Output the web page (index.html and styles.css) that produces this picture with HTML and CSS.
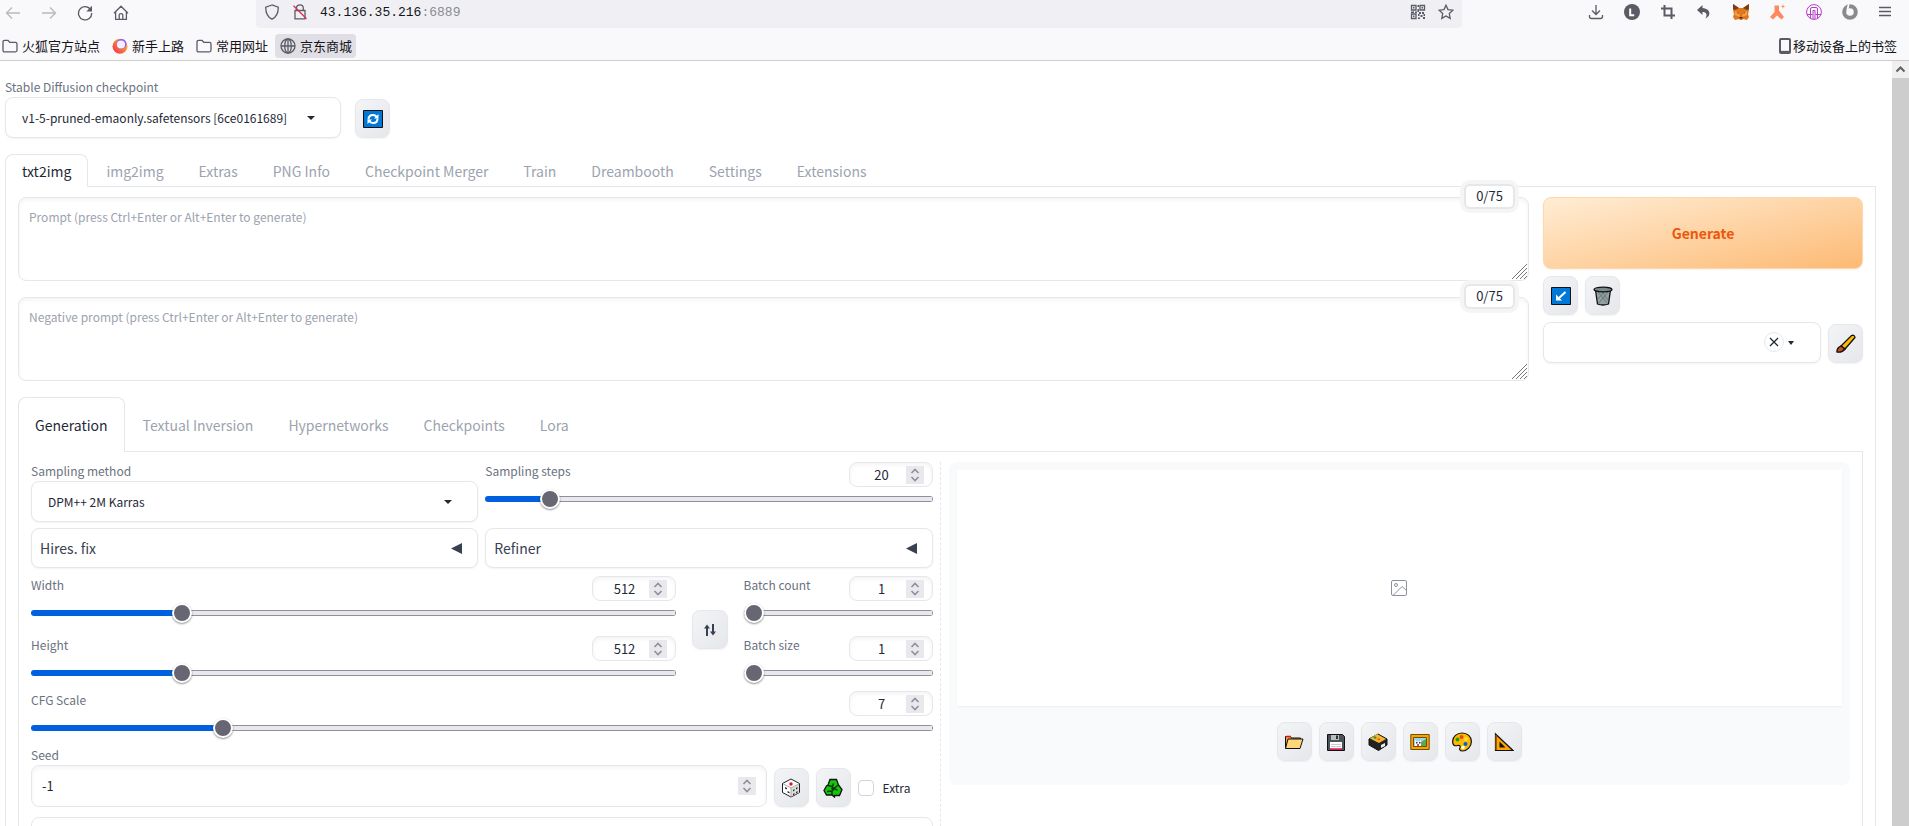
FILE: index.html
```html
<!DOCTYPE html>
<html lang="en">
<head>
<meta charset="utf-8">
<title>Stable Diffusion</title>
<link rel="stylesheet" href="styles.css">
</head>
<body>
<header class="chrome">
  <div class="toolbar">
    <nav class="nav-icons">
      <button class="plain faded" aria-label="Back"><svg width="16" height="16" viewBox="0 0 16 16"><path d="M15 8H2M7 2.500L1.500 8l5.500 5.500"/></svg></button>
      <button class="plain faded" aria-label="Forward"><svg width="16" height="16" viewBox="0 0 16 16"><path d="M1 8h13M9 2.500L14.500 8 9 13.500"/></svg></button>
      <button class="plain" aria-label="Reload"><svg width="16" height="16" viewBox="0 0 16 16"><path d="M13.500 4.500A6.600 6.600 0 1 0 14.700 8"/><path class="solid" d="M15 .8v5.700H9.300z"/></svg></button>
      <button class="plain" aria-label="Home"><svg width="16" height="16" viewBox="0 0 16 16"><path d="M1 8.300L8 1.200l7 7.100M2.600 7v7.300h10.800V7M6.200 14V9.800q0-1.200 1.800-1.200t1.800 1.200V14"/></svg></button>
    </nav>
    <div class="urlbar">
      <svg width="16" height="16" viewBox="0 0 16 16"><path d="M8 1L1.700 3.200c0 6 2 10 6.300 12 4.300-2 6.300-6 6.300-12z"/></svg>
      <svg width="16" height="16" viewBox="0 0 16 16"><path d="M4.500 6.500V4.300a3.400 3.400 0 0 1 6.800 0v2.200M3 6.500h10v8.300H3z"/><path class="red" d="M1.500 1.800l13 13"/></svg>
      <div class="url"><b>43.136.35.216</b>:6889</div>
      <div class="url-end">
        <svg width="16" height="16" viewBox="0 0 16 16"><path d="M1.500 1.500h4.500v4.500h-4.500zM10 1.500h4.500v4.500H10zM1.500 10h4.500v4.500h-4.500z"/><path class="solid" d="M3 3h1.500v1.500H3zM11.500 3H13v1.500h-1.500zM3 11.500h1.500V13H3zM7.500 1H9v2H7.500zM7.500 5H9v3H7.500zM1 7.500h3V9H1zM5 7.500h2V9H5zM9 8h2v2H9zM12 8h2v2h-2zM8 10h1.500v2H8zM10.500 11h2v2h-2zM13 13h2v2h-2zM8 13.500h2V15H8zM13.500 10H15v2h-1.500z"/></svg>
        <svg width="16" height="16" viewBox="0 0 16 16"><path d="M8 1.200l2 4.400 4.900.6-3.600 3.300.9 4.900L8 12l-4.200 2.400.9-4.900L1.100 6.200 6 5.600z"/></svg>
      </div>
    </div>
    <div class="ext-icons">
      <svg width="16" height="16" viewBox="0 0 16 16"><path d="M8 1v9M4 6.500l4 4 4-4M1.500 11v1.500q0 2 2 2h9q2 0 2-2V11"/></svg>
      <svg width="16" height="16" viewBox="0 0 16 16"><circle class="solid" cx="8" cy="8" r="8"/><path class="white" d="M6.200 4.500v6.800h4"/></svg>
      <svg width="16" height="16" viewBox="0 0 16 16"><path class="thick" d="M4.500 1v10.500H15M1 4.500h10.500V15"/></svg>
      <svg width="16" height="16" viewBox="0 0 16 16"><path class="solid" d="M6.500 1L1 6l5.500 5V8c4 0 5 2.500 3 6.500 5-2 6.500-9.500-3-10.500z"/></svg>
      <svg width="18" height="16" viewBox="0 0 18 16"><path fill="#e2761b" d="M1 0l6 4h4l6-4v6l-1 4 1 3-2 3-4-1-1 1H8l-1-1-4 1-2-3 1-3-1-4z"/><path fill="#763e1a" d="M1 0l6 4-4 2-2-1zM17 0l-6 4 4 2 2-1z"/><path fill="#f6a04a" d="M3 7l4 2 1 4-5-2zM15 7l-4 2-1 4 5-2z"/><path fill="#333" d="M5 8l2 1.500H5.500zM13 8l-2 1.500h1.500zM7.500 13h3v1.500h-3z"/></svg>
      <svg width="16" height="16" viewBox="0 0 16 16"><path fill="#ff8a5c" d="M4.500 1.500h4.500v5L14 13l-2.500 2.500-4.500-4-4 4L0 13l4.500-5z"/><path fill="#ff8a5c" d="M13 0l.6 1.900 1.900.6-1.900.6L13 5l-.6-1.900-1.900-.6 1.900-.6z"/></svg>
      <svg width="16" height="16" viewBox="0 0 16 16"><g class="purple"><circle cx="8" cy="8" r="7.400"/><path d="M4.500 14V5q0-1.500 1.500-1.500h4q1.500 0 1.500 1.500v9M7 15V6.500h2V15M1 10.500h5.500M9.500 10.500H15"/></g></svg>
      <svg width="16" height="16" viewBox="0 0 16 16"><circle class="ring" cx="8" cy="8" r="5.800"/><path fill="#f9f9fb" d="M6 0h1.500l-1 6H4.500L5 3z"/></svg>
      <button class="plain" aria-label="Menu"><svg width="14" height="16" viewBox="0 0 14 16"><path d="M1 3.500h12M1 7.500h12M1 11.500h12"/></svg></button>
    </div>
  </div>
  <nav class="bookmarks">
    <a href="#"><svg width="16" height="16" viewBox="0 0 16 16"><path d="M1 4q0-1.700 1.700-1.700h3.300l1.800 2h5.700Q15 4.300 15 6v6.300q0 1.500-1.500 1.500h-11Q1 13.800 1 12.300z"/></svg>火狐官方站点</a>
    <a href="#"><svg width="16" height="16" viewBox="0 0 16 16"><defs><linearGradient id="fx" x1="1" y1="0" x2="0" y2="1"><stop offset="0" stop-color="#ffe040"/><stop offset=".5" stop-color="#ff7a2a"/><stop offset="1" stop-color="#f0206a"/></linearGradient></defs><circle cx="8" cy="8.300" r="7.500" fill="url(#fx)"/><circle cx="9.500" cy="6" r="5" fill="#9059ff"/><circle cx="9" cy="6.500" r="4.100" fill="#f5eefc"/></svg>新手上路</a>
    <a href="#"><svg width="16" height="16" viewBox="0 0 16 16"><path d="M1 4q0-1.700 1.700-1.700h3.300l1.800 2h5.700Q15 4.300 15 6v6.300q0 1.500-1.500 1.500h-11Q1 13.800 1 12.300z"/></svg>常用网址</a>
    <a href="#" class="current"><svg width="16" height="16" viewBox="0 0 16 16"><circle cx="8" cy="8" r="7"/><ellipse cx="8" cy="8" rx="3.300" ry="7"/><path d="M1 8h14M8 1v14"/></svg>京东商城</a>
    <a href="#" class="mobile"><svg width="12" height="16" viewBox="0 0 12 16"><rect class="thick" x="1" y="1" width="10" height="14" rx="1"/><path d="M2 13.500h8"/></svg>移动设备上的书签</a>
  </nav>
</header>

<div class="viewport">
<main class="page">
  <div class="checkpoint">
    <div class="field">
      <label for="ckpt">Stable Diffusion checkpoint</label>
      <div class="select-box ckpt"><select id="ckpt"><option>v1-5-pruned-emaonly.safetensors [6ce0161689]</option></select><svg class="caret" width="8" height="4" viewBox="0 0 8 4"><path d="M0 0h8L4 4z"/></svg></div>
    </div>
    <button class="tool" aria-label="Refresh"><svg width="20" height="20" viewBox="0 0 20 20"><path fill="#0078d7" stroke="#111" d="M.5 1.500h19v17H.5z"/><path fill="none" stroke="#fff" stroke-width="2" d="M5.500 10.500q0-4.500 4.500-4.500 2.500 0 3.700 2M14.500 9.500q0 4.500-4.500 4.500-2.500 0-3.700-2"/><path fill="#fff" d="M15.500 5v4.500H11zM4.500 15v-4.500H9z"/></svg></button>
  </div>

  <nav class="tabs">
    <button class="on">txt2img</button><button>img2img</button><button>Extras</button><button>PNG Info</button><button>Checkpoint Merger</button><button>Train</button><button>Dreambooth</button><button>Settings</button><button>Extensions</button>
  </nav>
  <section class="panel outer">
    <div class="top">
      <div class="prompts">
        <div class="prompt"><textarea aria-label="Prompt" placeholder="Prompt (press Ctrl+Enter or Alt+Enter to generate)"></textarea><span class="counter">0/75</span><svg class="grip" width="15" height="15" viewBox="0 0 15 15"><path d="M0 15L15 0M4 15L15 4M8 15l7-7M12 15l3-3"/></svg></div>
        <div class="prompt"><textarea aria-label="Negative prompt" placeholder="Negative prompt (press Ctrl+Enter or Alt+Enter to generate)"></textarea><span class="counter">0/75</span><svg class="grip" width="15" height="15" viewBox="0 0 15 15"><path d="M0 15L15 0M4 15L15 4M8 15l7-7M12 15l3-3"/></svg></div>
      </div>
      <div class="actions">
        <button class="generate">Generate</button>
        <div class="tools">
          <button class="tool" aria-label="Read parameters"><svg width="20" height="20" viewBox="0 0 20 20"><path fill="#0078d7" stroke="#111" d="M.5 1.500h19v17H.5z"/><path fill="none" stroke="#fff" stroke-width="2" d="M14.500 6L8 12"/><path fill="#fff" d="M5 14.500V8.500l6 6z"/></svg></button>
          <button class="tool" aria-label="Clear prompt"><svg width="20" height="20" viewBox="0 0 20 20"><path fill="#93a1a3" stroke="#111" stroke-width="1.300" d="M2.500 4L4.500 18q5.500 2 11 0l2-14z"/><path stroke="#6b7779" fill="none" d="M5 6l9 11M9 6l6 8M15 6L6 17M11 6l-6 7"/><ellipse cx="10" cy="3.500" rx="9" ry="2.300" fill="#7b898b" stroke="#111" stroke-width="1.300"/></svg></button>
        </div>
        <div class="styles-row">
          <div class="select-box"><select aria-label="Styles"><option></option></select><button class="clear" aria-label="Clear styles"><svg width="10" height="10" viewBox="0 0 10 10"><path d="M1 1l8 8M9 1L1 9"/></svg></button><svg class="caret" width="8" height="4" viewBox="0 0 8 4"><path d="M1 0h6L4 4z"/></svg></div>
          <button class="tool" aria-label="Edit styles"><svg width="20" height="20" viewBox="0 0 20 20"><path fill="#ffb900" stroke="#111" stroke-width="1.300" d="M5 12L15.500 1.500q3-1 3.500 2L9 15z"/><path fill="#c4501b" stroke="#111" stroke-width="1.300" d="M1 18q-.5-2 1.500-4.500L5 12l4 3q-3 4-8 3z"/></svg></button>
        </div>
      </div>
    </div>

    <nav class="tabs tall">
      <button class="on">Generation</button><button>Textual Inversion</button><button>Hypernetworks</button><button>Checkpoints</button><button>Lora</button>
    </nav>
    <section class="panel inner">
      <div class="settings">
        <div class="pair">
          <div class="field">
            <label for="method">Sampling method</label>
            <div class="select-box"><select id="method"><option>DPM++ 2M Karras</option></select><svg class="caret" width="8" height="4" viewBox="0 0 8 4"><path d="M0 0h8L4 4z"/></svg></div>
          </div>
          <div class="slider">
            <label for="steps">Sampling steps</label>
            <div class="num"><input type="number" id="steps" value="20"><svg class="spin" width="18" height="18" viewBox="0 0 18 18"><path d="M5.500 7L9 3.500 12.500 7M5.500 11L9 14.500l3.500-3.500"/></svg></div>
            <input type="range" aria-label="Sampling steps" min="1" max="150" value="20" style="--f:.1275">
          </div>
        </div>
        <div class="pair accordions">
          <button class="accordion">Hires. fix<svg width="11" height="11" viewBox="0 0 11 11"><path d="M11 0v11L0 5.500z"/></svg></button>
          <button class="accordion">Refiner<svg width="11" height="11" viewBox="0 0 11 11"><path d="M11 0v11L0 5.500z"/></svg></button>
        </div>
        <div class="sizes">
          <div class="stack">
            <div class="slider"><label for="w">Width</label><div class="num"><input type="number" id="w" value="512"><svg class="spin" width="18" height="18" viewBox="0 0 18 18"><path d="M5.500 7L9 3.500 12.500 7M5.500 11L9 14.500l3.500-3.500"/></svg></div><input type="range" aria-label="Width" min="64" max="2048" value="512" style="--f:.2258"></div>
            <div class="slider"><label for="h">Height</label><div class="num"><input type="number" id="h" value="512"><svg class="spin" width="18" height="18" viewBox="0 0 18 18"><path d="M5.500 7L9 3.500 12.500 7M5.500 11L9 14.500l3.500-3.500"/></svg></div><input type="range" aria-label="Height" min="64" max="2048" value="512" style="--f:.2258"></div>
          </div>
          <button class="tool" aria-label="Swap width and height"><svg width="12" height="12" viewBox="0 0 12 12"><path fill="none" stroke="#374151" stroke-width="2" d="M3 12V3M9 0v9"/><path fill="#374151" d="M0 4.500L3 .5l3 4zM6 7.500l3 4 3-4z"/></svg></button>
          <div class="stack">
            <div class="slider"><label for="bc">Batch count</label><div class="num"><input type="number" id="bc" value="1"><svg class="spin" width="18" height="18" viewBox="0 0 18 18"><path d="M5.500 7L9 3.500 12.500 7M5.500 11L9 14.500l3.500-3.500"/></svg></div><input type="range" aria-label="Batch count" min="1" max="100" value="1" style="--f:0"></div>
            <div class="slider"><label for="bs">Batch size</label><div class="num"><input type="number" id="bs" value="1"><svg class="spin" width="18" height="18" viewBox="0 0 18 18"><path d="M5.500 7L9 3.500 12.500 7M5.500 11L9 14.500l3.500-3.500"/></svg></div><input type="range" aria-label="Batch size" min="1" max="8" value="1" style="--f:0"></div>
          </div>
        </div>
        <div class="slider cfg"><label for="cfg">CFG Scale</label><div class="num"><input type="number" id="cfg" value="7"><svg class="spin" width="18" height="18" viewBox="0 0 18 18"><path d="M5.500 7L9 3.500 12.500 7M5.500 11L9 14.500l3.500-3.500"/></svg></div><input type="range" aria-label="CFG Scale" min="1" max="30" value="7" style="--f:.2069"></div>
        <div class="seed-row">
          <div class="field">
            <label for="seed">Seed</label>
            <div class="num wide"><input type="number" id="seed" value="-1"><svg class="spin" width="18" height="18" viewBox="0 0 18 18"><path d="M5.500 7L9 3.500 12.500 7M5.500 11L9 14.500l3.500-3.500"/></svg></div>
          </div>
          <button class="tool" aria-label="Random seed"><svg width="20" height="20" viewBox="0 0 20 20"><path fill="#fff" stroke="#222" d="M10 1l8.500 4.500v9L10 19l-8.500-4.500v-9z"/><path fill="#ddd" d="M10 10l8-4v8.500L10 18.500z"/><path fill="none" stroke="#aaa" d="M2 5.800L10 10l8-4.200M10 10v8.500"/><circle cx="10" cy="6" r="1.700" fill="#e81123"/><path fill="#222" d="M4 9l2 1v1.500l-2-1zM6.500 13l2 1v1.500l-2-1zM12 12l1.500-1v1.500L12 13.500zM15 10l1.500-1v1.500L15 11.500zM12 16l1.500-1v1.500L12 17.500zM15 14l1.500-1v1.500L15 15.500z"/></svg></button>
          <button class="tool" aria-label="Reuse seed"><svg width="20" height="20" viewBox="0 0 20 20"><path fill="#16c60c" stroke="#111" stroke-width="1.300" d="M7 1.500h6.500l2 5.500 3.500 4.500-2.500 6h-5v1.500L9 17H3.500L1 12.500 3.500 8 5 7z"/><path fill="none" stroke="#0b3d08" stroke-width="1.500" d="M5 7.500l4.500 1 1-3M15.500 7l-4 3 3 2.500M9 17v-4l-5 .5"/><path fill="#0b3d08" d="M8 10l2-1.500 2 3-2.500 2z"/></svg></button>
          <label class="check"><input type="checkbox">Extra</label>
        </div>
        <div class="script-box"></div>
      </div>
      <div class="divider"></div>
      <div class="results">
        <div class="gallery"><svg width="18" height="18" viewBox="0 0 18 18"><rect x="1.500" y="1.500" width="15" height="15" rx="1.500"/><circle cx="6" cy="6" r="1.500"/><path d="M3 16.500l9-9 4.500 4"/></svg></div>
        <div class="tools">
          <button class="tool" aria-label="Open folder"><svg width="20" height="20" viewBox="0 0 20 20"><path fill="#e8a33d" stroke="#111" d="M1.500 16V4.500h5l1 1.500h9v3L14 16z"/><path fill="#ffd679" stroke="#111" d="M1.500 16.500L4 7h15l-3 9.500z"/><path stroke="#e81123" stroke-width="1.500" d="M2 4.500h5"/></svg></button>
          <button class="tool" aria-label="Save image"><svg width="20" height="20" viewBox="0 0 20 20"><path fill="#4c5358" stroke="#111" d="M1.500 2.500h15l2 2v14h-17z"/><path fill="#b9c0c4" d="M5 3h8v5H5z"/><path fill="#333" d="M10 3.500h2v3.500h-2z"/><path fill="#fff" d="M4 10h12v6.500H4z"/><path fill="#e3165b" d="M4 16.500h12V18H4z"/><path stroke="#ccc" d="M5 12.500h10M5 14.500h10"/></svg></button>
          <button class="tool" aria-label="Save zip"><svg width="20" height="20" viewBox="0 0 20 20"><path fill="#222" stroke="#111" d="M1 7l9-5 9 5v6l-8.500 5.500L1 13z"/><path fill="#f7b733" d="M2 6.500L9 2l9 5-7 4z"/><path fill="#3f9142" d="M5 5l2-1 2 2-2 1z"/><path fill="#e8562a" d="M9 7l2-1 1.500 1.500L11 8.500z"/><path fill="#eee" d="M13 13l4-2v3l-4 2z"/></svg></button>
          <button class="tool" aria-label="Send to img2img"><svg width="20" height="20" viewBox="0 0 20 20"><path fill="#f0a800" stroke="#7a4b00" d="M.8 2.500h18.400v15H.8z"/><path fill="#9ad4f5" stroke="#7a4b00" d="M3.500 5.500h13v9h-13z"/><path fill="#5aa84f" d="M11 10l5-3v7h-5z"/><path fill="#fff" d="M5 8l1.500 1.500h3L11 8v6H5z"/><path fill="#333" d="M6 10h1.500v1.500H6zM9 10h1.500v1.500H9z"/><path fill="#e84a4a" d="M7 12h2v2H7z"/></svg></button>
          <button class="tool" aria-label="Send to inpaint"><svg width="20" height="20" viewBox="0 0 20 20"><path fill="#ffb900" stroke="#111" stroke-width="1.200" d="M10 1c5.500 0 9.400 3.500 9.400 8.500S15 19 10.500 19c-3 0-3.500-2-2.500-3.500.8-1.500-.5-2.500-2.500-2C2 14.500.6 12.500.6 9.500.6 4.500 5 1 10 1z"/><circle cx="9.500" cy="5" r="2" fill="#e84a1f"/><circle cx="5.500" cy="7.500" r="2" fill="#16a60c"/><circle cx="14" cy="7" r="2" fill="#ffe135"/><circle cx="13.500" cy="12" r="2" fill="#0063d8"/><circle cx="11" cy="15.500" r="1.800" fill="#fff"/></svg></button>
          <button class="tool" aria-label="Send to extras"><svg width="20" height="20" viewBox="0 0 20 20"><path fill="#ffa500" stroke="#111" stroke-width="1.200" d="M1.500 2L19 18.500H1.500z"/><path fill="#111" d="M5.500 9.500l6 6h-6z"/><path stroke="#8a4b00" stroke-width="1.500" d="M2 3v15"/></svg></button>
        </div>
      </div>
    </section>
  </section>
</main>
<div class="scrollbar"><button class="plain" aria-label="Scroll up"><svg width="9" height="7" viewBox="0 0 9 7"><path d="M.5 5.500l4-4 4 4"/></svg></button></div>
</div>
</body>
</html>
```
FILE: styles.css
```css
* { box-sizing: border-box; }

body {
  margin: 0;
  height: 100vh;
  display: flex;
  flex-direction: column;
  overflow: hidden;
  background: #fff;
  color: #1f2937;
  font: 12px/18px "Noto Sans CJK SC", sans-serif;
}

button, input, select, textarea {
  font: inherit;
  color: inherit;
  margin: 0;
}

svg { flex: none; display: block; }

/* Browser chrome */
.chrome {
  flex: none;
  background: #f9f9fb;
  border-bottom: 1px solid #ccc;
  color: #15141a;
}
.chrome svg {
  fill: none;
  stroke: #5b5b66;
  stroke-width: 1.3;
}
.chrome svg .solid { fill: #5b5b66; stroke: none; }
.chrome svg .thick { stroke-width: 2; }
.chrome svg .white { stroke: #fff; stroke-width: 2; }
.chrome svg .red { stroke: #e22850; }
.chrome svg .purple { stroke: #b43fc5; stroke-width: 1; }
.chrome svg .ring { stroke: #8a8a8a; stroke-width: 4; }
.chrome svg [fill] { stroke: none; }

.plain { border: 0; padding: 0; background: none; }
.faded { opacity: .4; }

.toolbar { display: flex; height: 28px; }
.nav-icons {
  flex: 0 0 256px;
  display: flex;
  gap: 20px;
  padding: 0 0 3px 5px;
}
.nav-icons .plain { display: flex; align-items: center; }
.urlbar {
  flex: 1;
  display: flex;
  align-items: center;
  gap: 12px;
  padding: 0 8px 4px;
  background: #f0f0f4;
  border-radius: 0 0 4px 4px;
}
.url {
  padding-top: 2px;
  font: 13px/16px "Liberation Mono", monospace;
  color: #8a8a92;
}
.url b { font-weight: normal; color: #15141a; }
.url-end { display: flex; gap: 12px; margin-left: auto; }
.ext-icons {
  flex: 0 0 447px;
  display: flex;
  align-items: center;
  justify-content: space-between;
  padding: 0 17px 4px 126px;
}

.bookmarks {
  display: flex;
  align-items: center;
  gap: 3px;
  height: 32px;
  padding: 4px 8px 0 0;
  font-size: 13px;
}
.bookmarks a {
  display: flex;
  align-items: center;
  gap: 4px;
  height: 24px;
  padding: 0 4px 0 5px;
  border-radius: 4px;
  color: inherit;
  text-decoration: none;
}
.bookmarks a:first-child { padding-left: 2px; }
.bookmarks .current { background: #dfdfe5; }
.bookmarks .mobile { margin-left: auto; gap: 2px; }

/* Page and scrollbar */
.viewport {
  flex: 1;
  min-height: 0;
  display: flex;
  overflow: hidden;
}
.page { flex: 1; min-width: 0; padding: 17px 16px 0 5px; }
.scrollbar { flex: 0 0 17px; background: #cdcdcd; }
.scrollbar .plain {
  display: flex;
  align-items: center;
  justify-content: center;
  width: 17px;
  height: 17px;
  background: #f0f0f0;
}
.scrollbar svg { fill: none; stroke: #606060; stroke-width: 2; }

/* Shared controls */
.field { min-width: 0; }
.field > label, .slider > label { display: block; color: #6b7280; }
.field > label { height: 19px; }

.select-box { position: relative; height: 41px; }
.select-box select {
  appearance: none;
  width: 100%;
  height: 100%;
  padding: 0 32px 0 16px;
  border: 1px solid #e5e7eb;
  border-radius: 8px;
  background: #fff;
  box-shadow: 0 1px 2px rgba(0, 0, 0, .05);
}
.select-box.ckpt { width: 336px; }
.caret { position: absolute; right: 26px; top: 19px; fill: #1f2937; }
.clear {
  position: absolute;
  right: 37px;
  top: 10px;
  display: flex;
  align-items: center;
  justify-content: center;
  width: 20px;
  height: 20px;
  padding: 0;
  border: 1px solid #e5e7eb;
  border-radius: 50%;
  background: #fff;
}
.clear svg { stroke: #1f2937; stroke-width: 1.3; }

.tool {
  flex: none;
  display: flex;
  align-items: center;
  justify-content: center;
  width: 35px;
  height: 39px;
  padding: 0;
  border: 1px solid #e5e7eb;
  border-radius: 8px;
  background: linear-gradient(to bottom right, #f3f4f6, #e5e7eb);
  box-shadow: 0 1px 2px rgba(0, 0, 0, .05);
}

.checkpoint { display: flex; align-items: flex-end; gap: 14px; }

/* Tabs */
.tabs { display: flex; gap: 1px; margin: 16px 0 -1px; }
.tabs button {
  height: 33px;
  padding: 0 16px;
  border: 1px solid transparent;
  border-bottom: 0;
  border-radius: 8px 8px 0 0;
  background: none;
  color: #9ca3af;
  font-size: 14px;
}
.tabs .on { position: relative; background: #fff; border-color: #e5e7eb; color: #1f2937; }
.tabs.tall button { height: 55px; }

.panel { border: 1px solid #e5e7eb; border-bottom: 0; padding: 10px 12px; }

/* Prompt area */
.top { display: flex; gap: 14px; }
.prompts { flex: 1; display: flex; flex-direction: column; gap: 16px; }
.prompt { position: relative; height: 84px; }
.prompt textarea {
  display: block;
  width: 100%;
  height: 100%;
  padding: 10px;
  border: 1px solid #e5e7eb;
  border-radius: 8px;
  resize: none;
  background: #fff;
  box-shadow: inset 0 2px 4px rgba(0, 0, 0, .05);
}
.prompt textarea::placeholder { color: #9ca3af; opacity: 1; }
.counter {
  position: absolute;
  right: 14px;
  top: -13px;
  width: 51px;
  height: 25px;
  padding: 1px 0;
  border: 2px solid #e5e7eb;
  border-radius: 6px;
  background: #fff;
  box-shadow: 0 0 0 4px #f5f5f5;
  text-align: center;
  font-size: 13px;
}
.grip { position: absolute; right: 2px; bottom: 2px; stroke: #777; }

.actions { flex: 0 0 320px; display: flex; flex-direction: column; gap: 7px; }
.generate {
  height: 72px;
  border: 1px solid #fed7aa;
  border-radius: 8px;
  background: linear-gradient(to bottom right, #ffedd5, #fdba74);
  box-shadow: 0 1px 2px rgba(0, 0, 0, .05);
  color: #ea580c;
  font-size: 14px;
  font-weight: 600;
}
.tools { display: flex; gap: 7px; }
.styles-row { display: flex; align-items: flex-end; gap: 7px; }
.styles-row .select-box { flex: 1; }

/* Generation settings */
.inner { display: grid; grid-template-columns: minmax(0, 1fr) 16px minmax(0, 1fr); }
.divider { margin-left: 7px; border-left: 1px dashed #e5e7eb; }
.pair { display: grid; grid-template-columns: 1fr 1fr; gap: 7px; }
.accordions { margin: 6px 0 8px; }

.slider {
  display: grid;
  grid-template-columns: 1fr 84px;
  grid-template-rows: 25px 20px;
  row-gap: 2px;
}
.num {
  display: flex;
  align-items: center;
  height: 25px;
  padding: 0 8px;
  border: 1px solid #e5e7eb;
  border-radius: 8px;
  box-shadow: inset 0 2px 4px rgba(0, 0, 0, .05);
  font-size: 13px;
}
.num input {
  appearance: textfield;
  flex: 1;
  min-width: 0;
  padding: 0;
  border: 0;
  background: none;
  text-align: center;
}
.num input::-webkit-inner-spin-button { display: none; }
.num.wide { height: 42px; padding: 0 10px; }
.num.wide input { text-align: left; }
.spin { background: #e9e9ed; fill: none; stroke: #8f8f9d; stroke-width: 1.6; }

input[type="range"] {
  grid-column: 1 / -1;
  appearance: none;
  width: 100%;
  height: 20px;
  background: none;
}
input[type="range"]::-webkit-slider-runnable-track {
  height: 6px;
  border-radius: 3px;
  background:
    linear-gradient(#0060df, #0060df) 0 0 / calc(10px + (100% - 20px) * var(--f)) 100% no-repeat,
    linear-gradient(to left, #8f8f9d 1px, transparent 1px),
    linear-gradient(#8f8f9d 1px, #e9e9ed 1px 5px, #8f8f9d 5px);
}
input[type="range"]::-webkit-slider-thumb {
  appearance: none;
  width: 20px;
  height: 20px;
  margin-top: -7px;
  border: 2px solid #fff;
  border-radius: 50%;
  background: #676774;
  box-shadow: 0 1px 2px rgba(0, 0, 0, .45);
}

.accordion {
  display: flex;
  align-items: center;
  justify-content: space-between;
  height: 40px;
  padding: 0 15px 0 8px;
  border: 1px solid #e5e7eb;
  border-radius: 8px;
  background: #fff;
  box-shadow: 0 1px 2px rgba(0, 0, 0, .05);
  color: #374151;
  font-size: 14px;
}
.accordion svg { fill: #374151; }

.sizes {
  display: grid;
  grid-template-columns: minmax(0, 1fr) 36px 189px;
  align-items: center;
  gap: 16px;
}
.sizes .tool { width: 36px; }
.stack { display: flex; flex-direction: column; gap: 13px; }
.cfg { margin: 8px 0; }

.seed-row { display: flex; align-items: flex-end; gap: 7px; }
.seed-row .field { flex: 1; }
.check {
  display: flex;
  align-items: center;
  gap: 9px;
  width: 75px;
  height: 39px;
}
.check input {
  appearance: none;
  width: 16px;
  height: 16px;
  border: 1px solid #d1d5db;
  border-radius: 4px;
  background: #fff;
}
.script-box {
  height: 60px;
  margin-top: 10px;
  border: 1px solid #e5e7eb;
  border-radius: 8px;
}

/* Output gallery */
.results {
  align-self: start;
  padding: 8px 8px 24px;
  border-radius: 8px;
  background: #f9fafb;
}
.gallery {
  display: flex;
  align-items: center;
  justify-content: center;
  height: 236px;
  background: #fff;
  box-shadow: 0 1px 2px rgba(0, 0, 0, .05);
}
.gallery svg { fill: none; stroke: #8b929d; }
.results .tools { justify-content: center; margin-top: 16px; }
```
